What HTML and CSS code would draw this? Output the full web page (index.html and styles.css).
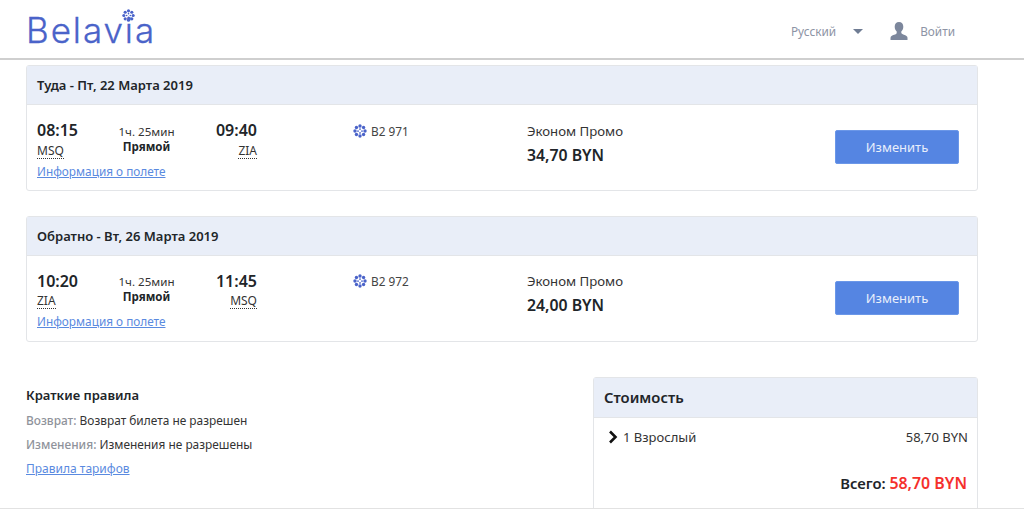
FILE: index.html
```html
<!DOCTYPE html>
<html lang="ru">
<head>
<meta charset="utf-8">
<title>Belavia</title>
<link rel="stylesheet" href="styles.css">
</head>
<body>
<svg class="defs" width="0" height="0" aria-hidden="true">
  <defs>
    <symbol id="flake" viewBox="0 0 24 24">
      <g fill="currentColor">
        <circle cx="12" cy="3.4" r="2.9"/><circle cx="18.1" cy="5.9" r="2.9"/><circle cx="20.6" cy="12" r="2.9"/><circle cx="18.1" cy="18.1" r="2.9"/>
        <circle cx="12" cy="20.6" r="2.9"/><circle cx="5.9" cy="18.1" r="2.9"/><circle cx="3.4" cy="12" r="2.9"/><circle cx="5.9" cy="5.9" r="2.9"/>
        <circle cx="12" cy="8.6" r="1.5"/><circle cx="15.4" cy="12" r="1.5"/><circle cx="12" cy="15.4" r="1.5"/><circle cx="8.6" cy="12" r="1.5"/>
      </g>
    </symbol>
  </defs>
</svg>
<header class="topbar">
  <div class="logo"><span class="logo-text">Belavia</span><svg class="logo-flake"><use href="#flake"/></svg></div>
  <nav class="topnav">
    <span class="lang">Русский</span>
    <span class="caret"></span>
    <svg class="user" viewBox="0 0 18 18"><path d="M9 0c2.7 0 4.3 2 4.3 4.7 0 1.9-.8 3.7-2 4.7v1.4c0 .8 1 1.2 2.6 1.9 2 .8 3.6 1.5 3.6 3.1V18H.5v-2.1c0-1.6 1.6-2.3 3.6-3.1 1.6-.7 2.6-1.1 2.6-1.9V9.4c-1.2-1-2-2.8-2-4.7C4.700 2 6.300 0 9 0z"/></svg>
    <span class="login">Войти</span>
  </nav>
</header>
<main class="content">
  <section class="card flight">
    <h2 class="card-head">Туда - Пт, 22 Марта 2019</h2>
    <div class="flight-body">
      <div class="route">
        <div class="point"><b class="time">08:15</b><abbr class="code">MSQ</abbr></div>
        <div class="middle"><span class="duration">1ч. 25мин</span><b class="direct">Прямой</b></div>
        <div class="point end"><b class="time">09:40</b><abbr class="code">ZIA</abbr></div>
        <a class="info" href="#">Информация о полете</a>
      </div>
      <div class="number"><svg class="flake"><use href="#flake"/></svg>B2 971</div>
      <div class="fare"><span class="fare-name">Эконом Промо</span><b class="fare-price">34,70 BYN</b></div>
      <button class="change">Изменить</button>
    </div>
  </section>
  <section class="card flight">
    <h2 class="card-head">Обратно - Вт, 26 Марта 2019</h2>
    <div class="flight-body">
      <div class="route">
        <div class="point"><b class="time">10:20</b><abbr class="code">ZIA</abbr></div>
        <div class="middle"><span class="duration">1ч. 25мин</span><b class="direct">Прямой</b></div>
        <div class="point end"><b class="time">11:45</b><abbr class="code">MSQ</abbr></div>
        <a class="info" href="#">Информация о полете</a>
      </div>
      <div class="number"><svg class="flake"><use href="#flake"/></svg>B2 972</div>
      <div class="fare"><span class="fare-name">Эконом Промо</span><b class="fare-price">24,00 BYN</b></div>
      <button class="change">Изменить</button>
    </div>
  </section>
  <div class="lower">
    <section class="rules">
      <h3 class="rules-title">Краткие правила</h3>
      <p class="rule"><span class="rule-label">Возврат:</span> Возврат билета не разрешен</p>
      <p class="rule"><span class="rule-label">Изменения:</span> Изменения не разрешены</p>
      <a class="tariff" href="#">Правила тарифов</a>
    </section>
    <section class="card cost">
      <h2 class="cost-head">Стоимость</h2>
      <div class="cost-row">
        <span class="pax"><svg class="chev" viewBox="0 0 10 14"><path d="M2 1.500 7.500 7 2 12.500"/></svg>1 Взрослый</span>
        <span>58,70 BYN</span>
      </div>
      <div class="total">Всего: <span class="total-sum">58,70 BYN</span></div>
    </section>
  </div>
</main>
<div class="footer-line"></div>
</body>
</html>
```
FILE: styles.css
```css
* { box-sizing: border-box; }
html, body { height: 509px; overflow: hidden; }
body {
  margin: 0;
  position: relative;
  background: #fff;
  color: #212529;
  font-family: "Noto Sans", "Open Sans", sans-serif;
  font-size: 12px;
}
.defs { position: absolute; }
.topbar {
  height: 60px;
  border-bottom: 2px solid #cfcfcf;
  display: flex;
  justify-content: space-between;
  padding-left: 26px;
}
.logo { position: relative; width: 130px; height: 58px; }
.logo-text {
  display: block;
  margin-top: 7px;
  font-family: "Inter", sans-serif;
  font-weight: 300;
  font-size: 35px;
  letter-spacing: 1.900px;
  line-height: 46px;
  color: #4a63c9;
  -webkit-text-stroke: 0.3px #4a63c9;
}
.logo-flake { position: absolute; left: 96px; top: 9px; width: 13px; height: 13px; color: #4a63c9; }
.topnav {
  display: flex;
  align-items: center;
  height: 62px;
  padding-right: 69px;
  color: #8d94a5;
  font-size: 11.800px;
}
.caret {
  margin-left: 17px;
  border-left: 5px solid transparent;
  border-right: 5px solid transparent;
  border-top: 5px solid #6f7c93;
}
.user { width: 18px; height: 18px; margin-left: 27px; fill: #7c879c; }
.login { margin-left: 12px; }
.content { padding: 5px 46px 0 26px; }
.card {
  border: 1px solid #e3e5e8;
  border-radius: 3px;
  background: #fff;
}
.flight { height: 126px; margin-bottom: 25px; }
.flight + .flight { margin-bottom: 35px; }
.flight + .flight .flight-body { margin-top: -1px; }
.flight + .flight .time { margin-top: 1px; margin-bottom: -1px; }
.flight + .flight .change { margin-top: 26px; }
.card-head {
  margin: 0;
  height: 39px;
  padding-left: 10px;
  background: #e9eef8;
  border-bottom: 1px solid #e3e5e8;
  font-size: 13px;
  font-weight: 600;
  line-height: 38px;
  color: #212529;
}
.flight-body { display: flex; padding-left: 10px; height: 86px; }
.route {
  width: 220px;
  display: grid;
  grid-template-columns: 60px 1fr 60px;
  grid-template-rows: 48px auto;
  padding-top: 15px;
}
.point { display: flex; flex-direction: column; align-items: flex-start; }
.point.end { align-items: flex-end; }
.time { font-size: 16px; font-weight: 600; line-height: 21px; color: #212529; }
.code {
  font-size: 12px;
  line-height: 15px;
  margin-top: 2px;
  border-bottom: 1px dotted #333;
  color: #333;
}
.middle { display: flex; flex-direction: column; align-items: center; padding-top: 4px; padding-right: 1px; }
.duration { font-size: 11.600px; line-height: 15px; color: #333; }
.direct { font-size: 11.500px; font-weight: 700; line-height: 15px; color: #212529; }
.info { grid-column: 1 / -1; color: #5a8ae0; font-size: 11.800px; line-height: 16px; margin-top: -5px; }
.number {
  margin-left: 96px;
  width: 174px;
  padding-top: 18px;
  display: flex;
  align-items: flex-start;
  font-size: 11.800px;
  line-height: 16px;
  color: #444;
}
.flake { width: 14px; height: 14px; margin-top: 1px; margin-right: 4px; color: #4a63c9; }
.fare { display: flex; flex-direction: column; padding-top: 16px; width: 308px; }
.fare-name { font-size: 13.200px; line-height: 20px; color: #333; }
.fare-price { margin-top: 4px; font-size: 15.800px; font-weight: 600; line-height: 20px; color: #212529; }
.change {
  align-self: flex-start;
  margin-top: 25px;
  width: 124px;
  height: 34px;
  border: 1px solid #6b97e8;
  border-radius: 2px;
  background: #5585e2;
  color: #e8eefb;
  font-family: inherit;
  font-size: 13px;
}
.lower { display: flex; justify-content: space-between; }
.rules { padding-top: 9px; }
.rules-title { margin: 0 0 8px; font-size: 13px; font-weight: 600; line-height: 18px; color: #212529; }
.rule { margin: 0 0 7px; font-size: 11.900px; line-height: 17px; color: #333; }
.rule-label { color: #8f939b; font-weight: 500; }
.tariff { font-size: 12px; line-height: 17px; color: #5a8ae0; }
.cost { width: 385px; height: 140px; }
.cost-head {
  margin: 0;
  height: 40px;
  padding-left: 10px;
  background: #e9eef8;
  border-bottom: 1px solid #e3e5e8;
  font-size: 14.800px;
  font-weight: 600;
  line-height: 39px;
  color: #212529;
}
.cost-row {
  display: flex;
  justify-content: space-between;
  padding: 10px 9px 0 14px;
  font-size: 13px;
  line-height: 18px;
  color: #333;
}
.pax { display: flex; align-items: center; }
.chev { width: 10px; height: 14px; margin-right: 5px; fill: none; stroke: #111; stroke-width: 2.6; }
.total { margin-top: 27px; padding-right: 10px; text-align: right; font-size: 14.800px; font-weight: 600; line-height: 20px; color: #212529; }
.total-sum { color: #f5302c; font-size: 15.900px; }
.footer-line { position: absolute; left: 0; right: 0; bottom: 0; height: 1px; background: #e2e2e2; }
```
